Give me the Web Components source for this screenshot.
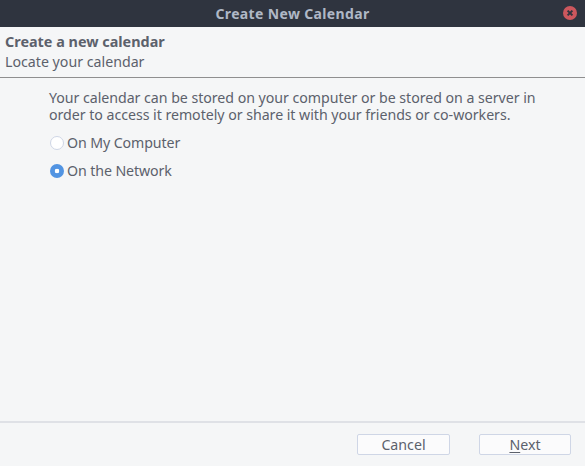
<!DOCTYPE html>
<html>
<head>
<meta charset="utf-8">
<title>Create New Calendar</title>
<style>
  html, body { margin:0; height:100%; }
  body { font:14.2px/18px "Noto Sans", sans-serif; color:#5c616c; background:#f5f6f7; overflow:hidden; }
</style>
</head>
<body>
<wizard-window heading="Create New Calendar">
  <wizard-header slot="header" heading="Create a new calendar" sub="Locate your calendar"></wizard-header>
  <p>Your calendar can be stored on your computer or be stored on a server in order to access it remotely or share it with your friends or co-workers.</p>
  <wizard-radio label="On My Computer"></wizard-radio>
  <wizard-radio label="On the Network" checked></wizard-radio>
  <wizard-button slot="footer" label="Cancel" style="width:93px"></wizard-button>
  <wizard-button slot="footer" label="Next" accesskey="N"></wizard-button>
</wizard-window>
<script>
class WizardWindow extends HTMLElement {
  constructor() {
    super();
    this.attachShadow({ mode: 'open' });
  }
  connectedCallback() {
    this.shadowRoot.innerHTML = `
      <style>
        :host { display:flex; flex-direction:column; height:466px; width:585px; }
        .bar { flex:none; height:27px; background:#2f343f; color:#afb8c6; display:flex; align-items:center; justify-content:center; position:relative; font-weight:700; font-size:14px; letter-spacing:.35px; }
        .close { position:absolute; right:8px; top:6px; width:14px; height:14px; }
        .body { flex:1; padding:11px 0 0 49px; }
        .foot { flex:none; height:45px; box-sizing:border-box; border-top:2px solid #dfe1e6; display:flex; justify-content:flex-end; gap:29px; padding:11px 14px 0 0; }
        ::slotted(p) { margin:0 0 6px; width:500px; line-height:17px; letter-spacing:-.04px; }
      </style>
      <div class="bar">${this.getAttribute('heading')}
        <svg class="close" viewBox="0 0 14 14"><circle cx="7" cy="7" r="7" fill="#cc575d"/><path d="M4.6 4.6l4.8 4.8M9.4 4.6l-4.8 4.8" stroke="#2f343f" stroke-width="2"/></svg>
      </div>
      <slot name="header"></slot>
      <div class="body"><slot></slot></div>
      <div class="foot"><slot name="footer"></slot></div>
    `;
  }
}

class WizardHeader extends HTMLElement {
  constructor() {
    super();
    this.attachShadow({ mode: 'open' });
  }
  connectedCallback() {
    this.shadowRoot.innerHTML = `
      <style>
        :host { display:block; height:51px; box-sizing:border-box; padding:5px 0 0 5px; border-bottom:1px solid #8f8f8f; line-height:20px; }
        b { display:block; font-weight:700; font-size:14.4px; }
      </style>
      <b>${this.getAttribute('heading')}</b>
      <span>${this.getAttribute('sub')}</span>
    `;
  }
}

class WizardRadio extends HTMLElement {
  constructor() {
    super();
    this.attachShadow({ mode: 'open' });
  }
  connectedCallback() {
    const on = this.hasAttribute('checked');
    this.shadowRoot.innerHTML = `
      <style>
        :host { display:flex; align-items:center; height:28px; margin-left:1px; gap:3px; letter-spacing:-.1px; }
        .dot { flex:none; width:14px; height:14px; box-sizing:border-box; border-radius:50%; border:1px solid #cfd6e6; background:#fff; }
        .dot.on { border:none; background:radial-gradient(circle, #fff 0 2px, #5294e2 2.6px); }
      </style>
      <span class="dot ${on ? 'on' : ''}"></span><span>${this.getAttribute('label')}</span>
    `;
  }
}

class WizardButton extends HTMLElement {
  constructor() {
    super();
    this.attachShadow({ mode: 'open' });
  }
  connectedCallback() {
    const label = this.getAttribute('label');
    const key = this.getAttribute('accesskey');
    const text = key ? label.replace(key, `<u>${key}</u>`) : label;
    this.shadowRoot.innerHTML = `
      <style>
        :host { display:flex; align-items:center; justify-content:center; width:92px; height:21px; box-sizing:border-box; border:1px solid #cfd6e6; border-radius:2px; background:#fbfbfc; }
        u { text-underline-offset:2px; }
      </style>
      <span>${text}</span>
    `;
  }
}

customElements.define('wizard-window', WizardWindow);
customElements.define('wizard-header', WizardHeader);
customElements.define('wizard-radio', WizardRadio);
customElements.define('wizard-button', WizardButton);
</script>
</body>
</html>
